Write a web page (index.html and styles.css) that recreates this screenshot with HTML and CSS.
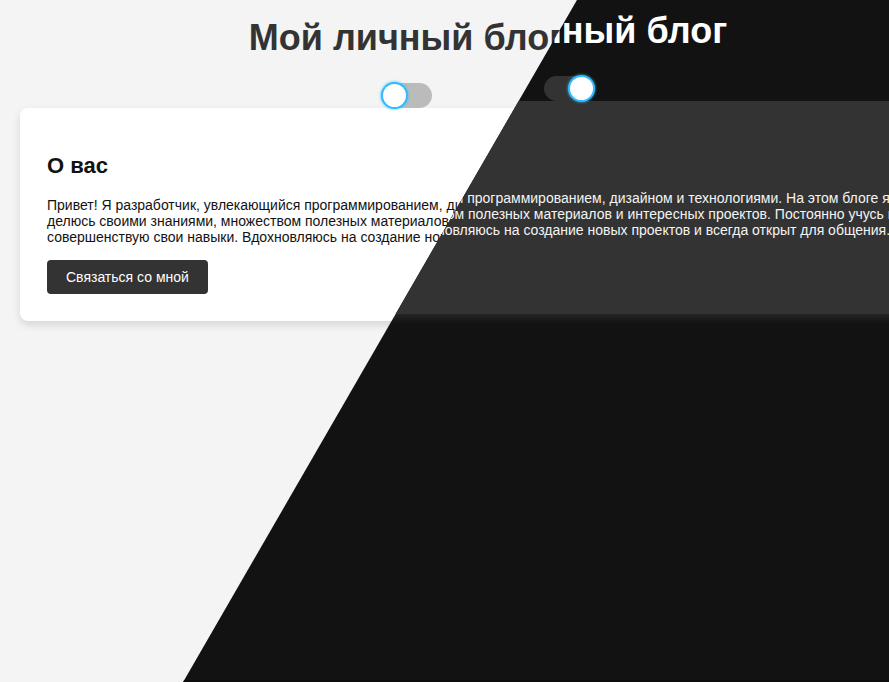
FILE: index.html
```html
<!DOCTYPE html>
<html lang="ru">
<head>
  <meta charset="UTF-8">
  <meta name="viewport" content="width=device-width, initial-scale=1">
  <title>Мой личный блог</title>
  <link rel="stylesheet" href="styles.css">
</head>
<body>
  <main class="split">
    <section class="theme theme-light">
      <div class="page">
        <h1 class="title">Мой личный блог</h1>
        <input class="switch" type="checkbox" aria-label="Тёмная тема">
        <article class="card">
          <h2 class="card-title">О вас</h2>
          <p class="card-text">Привет! Я разработчик, увлекающийся программированием, дизайном и технологиями. На этом блоге я<br>делюсь своими знаниями, множеством полезных материалов и интересных проектов. Постоянно учусь и<br>совершенствую свои навыки. Вдохновляюсь на создание новых проектов и всегда открыт для общения.</p>
          <button class="contact" type="button">Связаться со мной</button>
        </article>
      </div>
    </section>
    <section class="theme theme-dark">
      <div class="page">
        <h1 class="title">Мой личный блог</h1>
        <input class="switch" type="checkbox" aria-label="Тёмная тема" checked>
        <article class="card">
          <h2 class="card-title">О вас</h2>
          <p class="card-text">Привет! Я разработчик, увлекающийся программированием, дизайном и технологиями. На этом блоге я<br>делюсь своими знаниями, множеством полезных материалов и интересных проектов. Постоянно учусь и<br>совершенствую свои навыки. Вдохновляюсь на создание новых проектов и всегда открыт для общения.</p>
          <button class="contact" type="button">Связаться со мной</button>
        </article>
      </div>
    </section>
  </main>
</body>
</html>
```
FILE: styles.css
```css
* {
  box-sizing: border-box;
}

body {
  margin: 0;
  font-family: "Liberation Sans", Arial, sans-serif;
  font-size: 14px;
  line-height: 16px;
}

/* Both themes share one grid cell; the dark one is cut along a diagonal. */
.split {
  display: grid;
  grid-template-columns: minmax(0, 1fr);
  min-height: 100vh;
}

.theme {
  grid-area: 1 / 1;
  overflow: hidden;
}

.theme-light {
  background: #f4f4f4;
  color: #121212;
  padding-top: 17px;
}

.theme-dark {
  background: #121212;
  color: #f4f4f4;
  padding: 10px 0 0 163px;
  border-bottom: 2px solid #0e0c0e;
  clip-path: polygon(64.9% 0, 100% 0, 100% 100%, 20.6% 100%);
}

.page {
  display: flex;
  flex-direction: column;
  align-items: center;
  width: calc(100vw - 76px);
  padding: 0 20px;
}

.title {
  margin: 0 0 24px;
  font-size: 36px;
  line-height: 42px;
  color: #333;
  white-space: nowrap;
}

.theme-dark .title {
  color: #fff;
}

.switch {
  appearance: none;
  display: flex;
  align-items: center;
  width: 51px;
  height: 25px;
  margin: 0;
  padding: 0 2px;
  border-radius: 13px;
  background: #bbb;
  position: relative;
  z-index: 1;
  cursor: pointer;
}

.switch::before {
  content: "";
  width: 23px;
  height: 23px;
  border-radius: 50%;
  background: #fff;
  box-shadow: 0 0 0 2px #3bf, 0 0 3px 2px #3bf;
}

.switch:checked {
  justify-content: flex-end;
  background: #333;
}

.card {
  width: 100%;
  padding: 27px;
  border-radius: 8px;
  background: #fff;
  box-shadow: 0 4px 8px rgba(0, 0, 0, 0.12);
}

.theme-dark .card {
  background: #333;
  box-shadow: 0 4px 8px rgba(255, 255, 255, 0.1);
}

.card-title {
  margin: 18px 0;
  font-size: 22px;
  line-height: 26px;
}

.card-text {
  margin: 0 0 15px;
  white-space: nowrap;
}

.contact {
  display: block;
  height: 34px;
  padding: 0 19px;
  border: 0;
  border-radius: 4px;
  background: #333;
  color: #fff;
  font: inherit;
  cursor: pointer;
}
```
